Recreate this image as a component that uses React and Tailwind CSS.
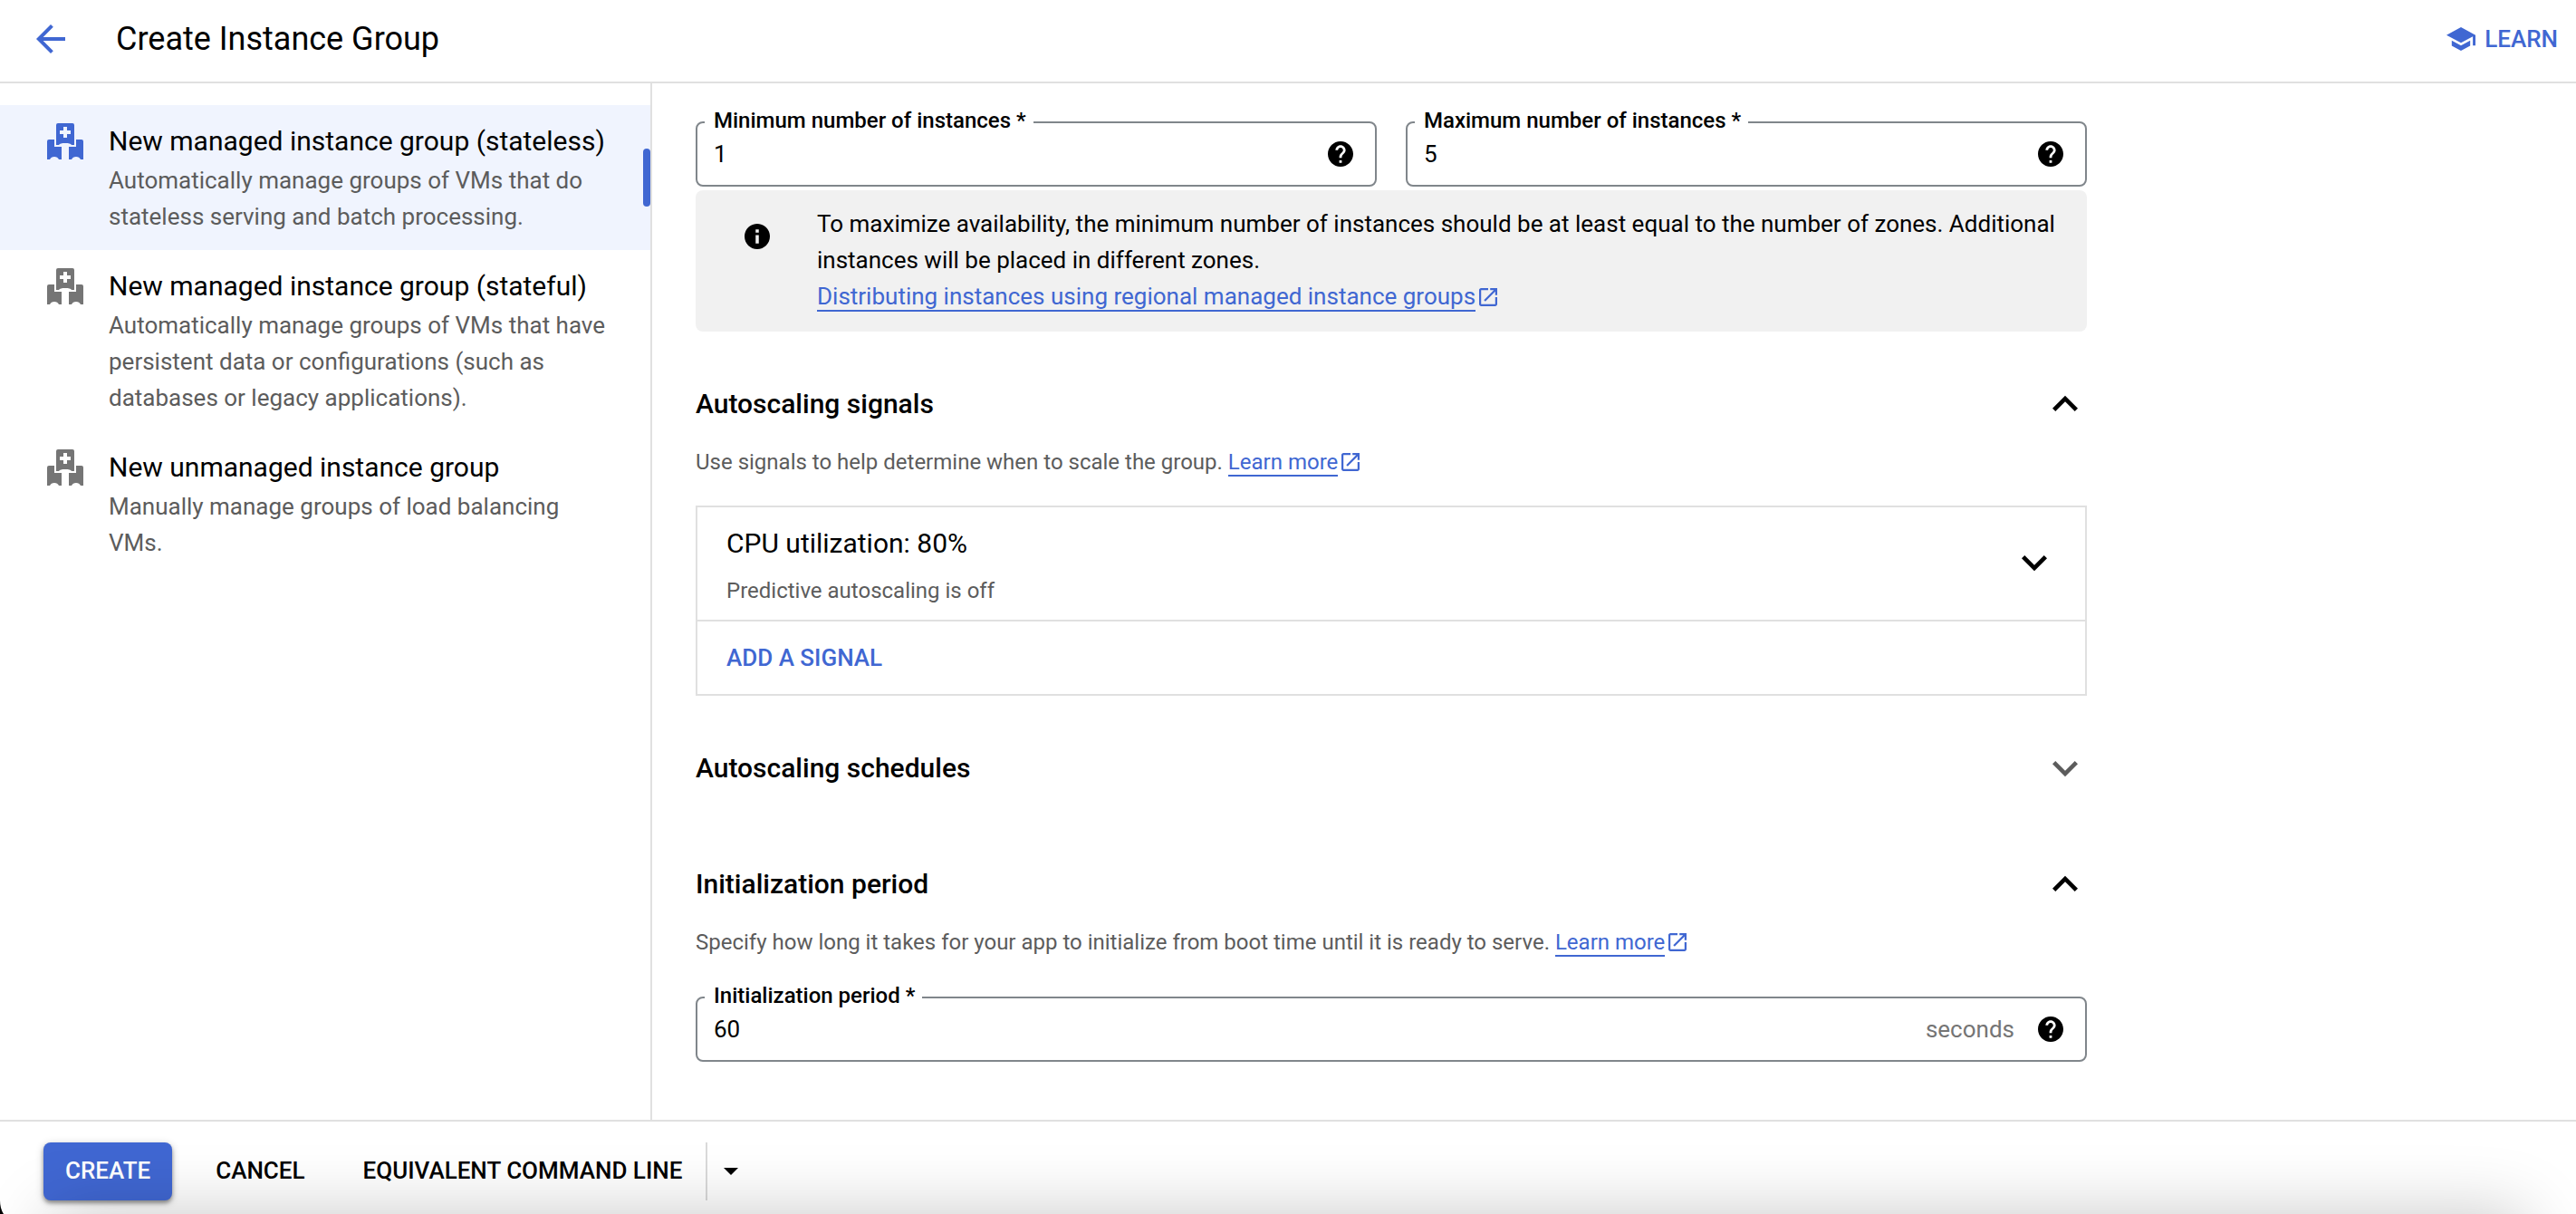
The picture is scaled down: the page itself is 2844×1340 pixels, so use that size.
import React, { useId } from "react";

function Icon({ d, viewBox, className }) {
  return (
    <svg viewBox={viewBox} className={className} fill="currentColor" fillRule="evenodd" aria-hidden="true">
      <path d={d} />
    </svg>
  );
}

function ArrowBackIcon() {
  return <Icon className="size-8" viewBox="4 4 16 16" d="M20 11H7.83l5.59-5.59L12 4l-8 8 8 8 1.41-1.41L7.83 13H20v-2z" />;
}

function SchoolIcon() {
  return <Icon className="size-8" viewBox="1 1 22 22" d="M5 13.18v4L12 21l7-3.82v-4L12 17l-7-3.82zM12 3L1 9l11 6 9-4.91V17h2V9L12 3z" />;
}

function HelpIcon() {
  return (
    <Icon
      className="size-7"
      viewBox="2 2 20 20"
      d="M12 2C6.48 2 2 6.48 2 12s4.48 10 10 10 10-4.48 10-10S17.52 2 12 2zm1 17h-2v-2h2v2zm2.07-7.75l-.9.92C13.45 12.9 13 13.5 13 15h-2v-.5c0-1.1.45-2.1 1.17-2.83l1.24-1.26c.37-.36.59-.86.59-1.41 0-1.1-.9-2-2-2s-2 .9-2 2H8c0-2.21 1.79-4 4-4s4 1.79 4 4c0 .88-.36 1.68-.93 2.25z"
    />
  );
}

function InfoIcon() {
  return (
    <Icon
      className="size-7 shrink-0"
      viewBox="2 2 20 20"
      d="M12 2C6.48 2 2 6.48 2 12s4.48 10 10 10 10-4.48 10-10S17.52 2 12 2zm1.25 15.5h-2.5V11h2.5v6.500zm0-8.500h-2.500V6.500h2.500V9z"
    />
  );
}

function ExpandIcon({ open }) {
  return (
    <Icon
      className="size-7 shrink-0"
      viewBox="6 6 12 12"
      d={open ? "M12 8l-6 6 1.410 1.410L12 10.830l4.590 4.580L18 14z" : "M16.590 8.590L12 13.170 7.410 8.590 6 10l6 6 6-6z"}
    />
  );
}

function OpenInNewIcon() {
  return (
    <svg viewBox="3 3 18 18" className="ml-1 -mb-0.5 inline-block size-5 align-baseline" fill="currentColor" aria-hidden="true">
      <path d="M19 19H5V5h7V3H5c-1.11 0-2 .9-2 2v14c0 1.1.89 2 2 2h14c1.1 0 2-.9 2-2v-7h-2v7zM14 3v2h3.59l-9.83 9.83 1.41 1.41L19 6.41V10h2V3h-7z" />
    </svg>
  );
}

function InstanceGroupIcon() {
  return (
    <Icon
      className="size-10 shrink-0"
      viewBox="0 0 40 40"
      d="M12 0H28A2 2 0 0 1 30 2V24H27C26 22.500 24 22 20 22S14 22.500 13 24H10V2A2 2 0 0 1 12 0zM18 4V8H14V12H18V16H22V12H26V8H22V4zM2 18H8V26H16V40H13C12 38 10.500 37 8 37S4 38 3 40H0V20A2 2 0 0 1 2 18zM38 18H32V26H24V40H27C28 38 29.500 37 32 37S36 38 37 40H40V20A2 2 0 0 0 38 18z"
    />
  );
}

const groupTypes = [
  {
    title: "New managed instance group (stateless)",
    text: "Automatically manage groups of VMs that do stateless serving and batch processing.",
    selected: true,
  },
  {
    title: "New managed instance group (stateful)",
    text: "Automatically manage groups of VMs that have persistent data or configurations (such as databases or legacy applications).",
  },
  {
    title: "New unmanaged instance group",
    text: "Manually manage groups of load balancing VMs.",
  },
];

function GroupType({ title, text, selected }) {
  return (
    <button
      type="button"
      aria-current={selected ? "page" : undefined}
      className={
        selected
          ? "relative flex w-full gap-7 bg-[#f0f4fe] pt-5 pr-12 pb-[17px] pl-13 text-left"
          : "relative flex w-full gap-7 pt-5 pr-12 pb-[17px] pl-13 text-left"
      }
    >
      <span className={selected ? "text-[#4067d2]" : "text-[#757575]"}>
        <InstanceGroupIcon />
      </span>
      <span className="flex flex-1 flex-col gap-[3px]">
        <span className="text-[30px] leading-10">{title}</span>
        <span className="text-[26px] leading-10 text-[#5c5c5c]">{text}</span>
      </span>
      {selected && <span className="absolute top-12 right-0 h-16 w-2 rounded bg-[#4067d2]" />}
    </button>
  );
}

function ExternalLink({ children }) {
  return (
    <a href="#" className="text-[#4067d2]">
      <span className="border-b-2 border-[#4067d2]">{children}</span>
      <OpenInNewIcon />
    </a>
  );
}

function NumberField({ label, value, suffix }) {
  const id = useId();
  return (
    <fieldset className="min-w-0 flex-1 rounded-lg border-2 border-[#80868b]">
      <legend className="ml-2 pr-2 pb-1 pl-2.5 text-[24px] leading-6 font-medium">
        <label htmlFor={id}>{label} *</label>
      </legend>
      <div className="flex h-[55px] items-center gap-[26px] pr-6 pb-3.5 pl-4.5">
        <input id={id} type="text" inputMode="numeric" defaultValue={value} className="h-10 min-w-0 flex-1 text-[26px] outline-none" />
        {suffix && <span className="text-[26px] leading-10 text-[#757575]">{suffix}</span>}
        <button type="button" aria-label={`Help: ${label}`}>
          <HelpIcon />
        </button>
      </div>
    </fieldset>
  );
}

function SectionHeading({ children, open }) {
  return (
    <h2 className="text-[30px] leading-10 font-medium">
      <button type="button" aria-expanded={open} className="flex w-full items-center justify-between pr-2.5 text-left">
        {children}
        <span className={open ? "text-black" : "text-[#5c5c5c]"}>
          <ExpandIcon open={open} />
        </span>
      </button>
    </h2>
  );
}

export default function App() {
  return (
    <div className="relative flex min-h-screen flex-col overflow-hidden bg-white font-[Roboto,sans-serif] text-black">
      <header className="flex h-23 items-center border-b-2 border-[#e0e0e0] pr-5 pb-1 pl-10">
        <button type="button" aria-label="Back" className="text-[#4067d2]">
          <ArrowBackIcon />
        </button>
        <h1 className="ml-14 text-[36px] leading-10">Create Instance Group</h1>
        <a href="#" className="ml-auto flex items-center gap-2.5 text-[26px] leading-10 font-medium text-[#4067d2]">
          <SchoolIcon />
          LEARN
        </a>
      </header>

      <div className="flex flex-1">
        <nav aria-label="Instance group type" className="w-180 shrink-0 border-r-2 border-[#e0e0e0] pt-6">
          {groupTypes.map((type) => (
            <GroupType key={type.title} {...type} />
          ))}
        </nav>

        <main className="min-w-0 flex-1 pt-[29px] pr-12 pb-4 pl-12">
          <div className="max-w-384">
            <div className="flex gap-8">
              <NumberField label="Minimum number of instances" value="1" />
              <NumberField label="Maximum number of instances" value="5" />
            </div>

            <div className="mt-1 flex gap-13 rounded-lg bg-[#f1f1f1] pt-[17px] pr-8 pb-[19px] pl-[54px] text-[26px] leading-10">
              <span className="pt-5">
                <InfoIcon />
              </span>
              <div>
                <p>
                  To maximize availability, the minimum number of instances should be at least equal to the number of zones.
                  Additional instances will be placed in different zones.
                </p>
                <p>
                  <ExternalLink>Distributing instances using regional managed instance groups</ExternalLink>
                </p>
              </div>
            </div>

            <section className="mt-15">
              <SectionHeading open>Autoscaling signals</SectionHeading>
              <p className="mt-6 text-[24px] leading-10 text-[#5c5c5c]">
                Use signals to help determine when to scale the group. <ExternalLink>Learn more</ExternalLink>
              </p>
              <div className="mt-7 border-2 border-[#e0e0e0]">
                <button
                  type="button"
                  aria-expanded="false"
                  className="flex w-full items-center justify-between border-b-2 border-[#e0e0e0] pt-5 pr-[42px] pb-4 pl-8 text-left"
                >
                  <span className="flex flex-col gap-4">
                    <span className="text-[30px] leading-10">CPU utilization: 80%</span>
                    <span className="text-[24px] leading-8 text-[#5c5c5c]">Predictive autoscaling is off</span>
                  </span>
                  <span className="pb-1.5">
                    <ExpandIcon />
                  </span>
                </button>
                <div className="px-8 py-5">
                  <button type="button" className="block text-[26px] leading-10 font-medium text-[#4067d2]">
                    ADD A SIGNAL
                  </button>
                </div>
              </div>
            </section>

            <section className="mt-15">
              <SectionHeading open={false}>Autoscaling schedules</SectionHeading>
            </section>

            <section className="mt-22">
              <SectionHeading open>Initialization period</SectionHeading>
              <p className="mt-6 mb-[27px] text-[24px] leading-10 text-[#5c5c5c]">
                Specify how long it takes for your app to initialize from boot time until it is ready to serve.{" "}
                <ExternalLink>Learn more</ExternalLink>
              </p>
              <NumberField label="Initialization period" value="60" suffix="seconds" />
            </section>
          </div>
        </main>
      </div>

      <footer className="flex h-26 items-center border-t-2 border-[#e0e0e0] pt-2 pl-12 text-[26px] leading-10 font-medium">
        <button
          type="button"
          className="h-16 rounded-lg bg-[#4067d2] px-6 pb-0.5 text-white shadow-[0_3px_4px_rgba(0,0,0,0.35),0_2px_10px_rgba(0,0,0,0.2)]"
        >
          CREATE
        </button>
        <button type="button" className="ml-6 h-16 px-6 pb-0.5">
          CANCEL
        </button>
        <button type="button" className="ml-4 h-16 pr-6.5 pb-0.5 pl-6">
          EQUIVALENT COMMAND LINE
        </button>
        <button type="button" aria-label="More command options" className="h-16 border-l-2 border-[#dadada] px-4.5">
          <svg viewBox="0 0 16 8" className="h-2 w-4" aria-hidden="true">
            <path d="M0 0h16l-8 8z" />
          </svg>
        </button>
      </footer>

      <div aria-hidden="true" className="pointer-events-none absolute inset-x-14 top-full h-40 shadow-[0_0_76px_rgba(0,0,0,0.22)]" />
      <svg viewBox="0 0 4 15" className="pointer-events-none absolute bottom-0 left-0 h-[15px] w-1" aria-hidden="true">
        <path d="M0 0Q0 9 4 15H0z" />
      </svg>
    </div>
  );
}
